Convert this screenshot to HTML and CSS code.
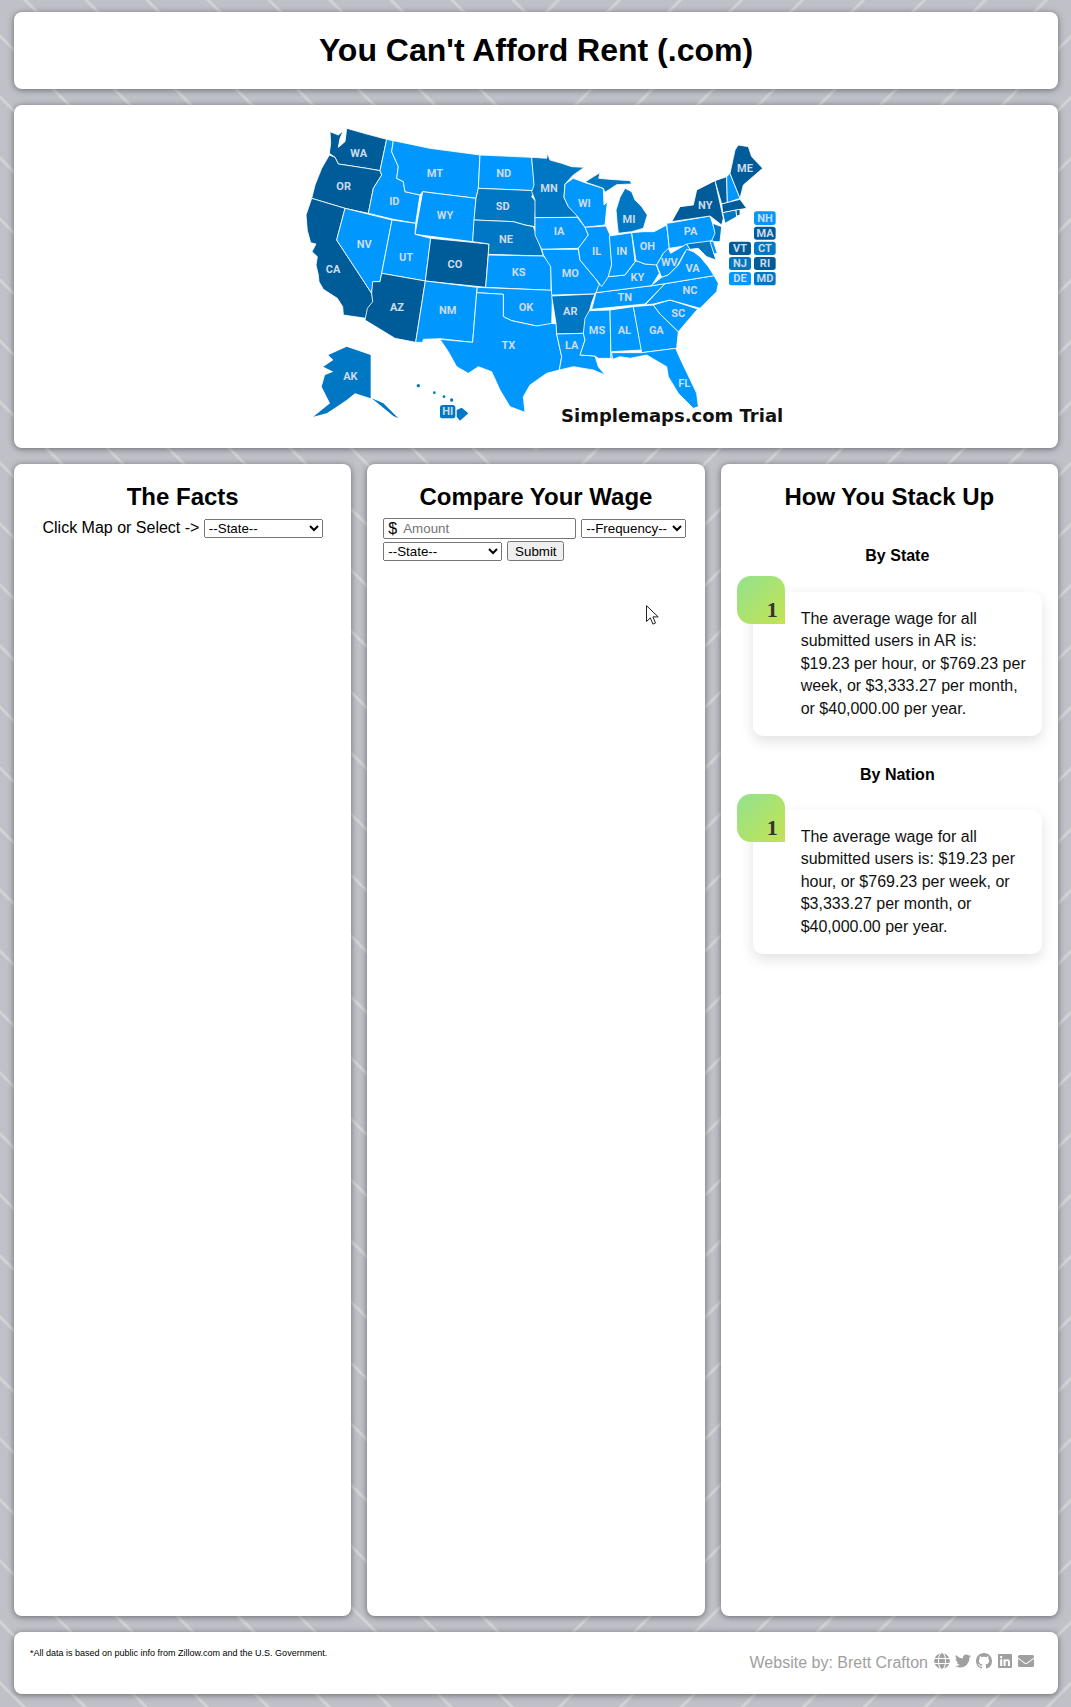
FILE: index.html
```html
<!DOCTYPE html>
<html lang="en">
<head>
    <meta charset="UTF-8">
    <meta name="viewport" content="width=device-width, initial-scale=1.0">
    <title>You Can't Afford Rent</title>
    <link rel="stylesheet" href="styles.css">
</head>
<body>
    <header class="panel site-header">
        <h1>You Can't Afford Rent (.com)</h1>
    </header>

    <section class="panel map-panel">
        <svg class="us-map" viewBox="-42 0 1620 990" role="img" aria-label="Map of the United States">
            <!-- West -->
            <g class="states">
                <polygon class="dark" points="150,65 175,75 190,62 180,85 175,112 195,95 200,55 260,72 320,88 300,182 260,175 215,168 175,162 165,142 148,130 152,100"/>
                <polygon class="dark" points="148,135 165,142 175,162 215,168 260,175 300,182 305,195 280,235 265,310 195,295 95,265 105,225 125,175"/>
                <polygon class="dark" points="95,265 195,295 170,390 275,550 280,575 258,625 190,615 188,590 172,565 130,538 117,515 115,495 108,465 112,440 96,425 108,402 92,398 82,362 78,315"/>
                <polygon class="light" points="195,295 336,330 305,490 300,515 280,515 275,550 170,390"/>
                <polygon class="light" points="320,88 340,92 335,125 355,170 350,205 370,215 375,245 420,255 407,340 336,327 265,310 280,235 305,195 300,182"/>
                <polygon class="light" points="340,92 450,115 600,135 595,235 588,265 428,245 420,255 375,245 370,215 350,205 355,170 335,125"/>
                <polygon class="light" points="428,245 588,265 578,395 405,373"/>
                <polygon class="light" points="336,330 407,340 405,373 452,385 436,513 305,490"/>
                <polygon class="dark" points="452,385 627,402 617,532 436,513"/>
                <polygon class="dark" points="305,490 436,513 407,697 345,685 255,630 262,595 278,575 275,550 278,515 300,515"/>
                <polygon class="light" points="436,513 592,532 590,548 578,697 480,686 430,688 428,697 407,697"/>
                <polygon class="light" points="600,135 755,142 765,242 595,235"/>
                <polygon class="mid" points="595,235 765,242 755,260 768,275 765,322 765,350 735,345 700,335 582,330 588,265"/>
                <polygon class="mid" points="582,330 700,335 735,345 760,350 775,390 790,438 625,433 627,402 578,395"/>
                <polygon class="light" points="625,435 790,438 805,455 813,470 813,541 617,532"/>
                <polygon class="light" points="592,532 815,541 817,560 815,645 770,648 695,632 670,620 670,553 590,548"/>
                <polygon class="light" points="590,548 670,553 670,620 695,632 770,648 815,640 830,642 830,672 845,740 838,780 800,790 750,825 730,860 735,907 690,890 660,840 635,785 595,770 565,790 530,770 505,725 480,688 578,697"/>
            </g>

            <!-- East, drawn from its own origin -->
            <g class="states" transform="translate(750 0)">
                <polygon class="mid" points="5,142 50,145 52,130 60,150 95,160 125,170 163,172 130,195 105,222 102,262 115,290 140,310 142,322 15,323 15,270 5,245 12,225"/>
                <polygon class="light" points="105,222 130,205 165,218 220,235 222,285 232,275 225,345 165,352 145,322 115,290 102,262"/>
                <polygon class="mid" points="165,216 190,200 210,188 206,205 240,208 300,212 305,222 260,224 225,247 220,235"/>
                <polygon class="mid" points="258,300 270,262 285,235 305,245 315,270 335,290 352,315 340,355 305,365 265,370 262,345"/>
                <polygon class="light" points="15,323 142,322 165,352 175,375 145,415 35,418 15,375"/>
                <polygon class="light" points="35,418 145,418 150,450 200,510 210,528 195,552 65,555 62,470 40,435"/>
                <polygon class="mid" points="65,558 195,552 185,578 160,670 80,672 78,640"/>
                <polygon class="light" points="80,672 160,670 165,690 150,735 195,738 205,770 225,795 190,780 130,770 88,780 95,740"/>
                <polygon class="light" points="165,625 178,602 240,600 243,745 205,745 195,738 150,735 165,690 160,670"/>
                <polygon class="light" points="240,600 310,590 335,720 245,725 248,748 243,745"/>
                <polygon class="light" points="310,590 370,585 390,612 445,665 440,715 335,728"/>
                <polygon class="light" points="245,728 335,728 437,715 450,745 500,850 505,890 490,895 445,850 415,800 410,770 350,735 300,745 270,740 248,748"/>
                <polygon class="light" points="370,585 420,570 503,597 445,665 390,612"/>
                <polygon class="light" points="345,585 405,521 552,497 565,520 560,545 510,595 420,570 370,582"/>
                <polygon class="light" points="198,548 365,527 405,521 345,582 185,598"/>
                <polygon class="light" points="205,528 235,500 285,495 318,452 345,462 378,462 388,490 365,527 198,548"/>
                <polygon class="light" points="165,352 228,348 240,375 245,465 235,500 215,530 200,510 150,450 145,415 175,375"/>
                <polygon class="light" points="238,378 305,368 315,455 285,495 235,500 245,465"/>
                <polygon class="light" points="305,368 340,365 372,365 410,345 418,415 400,430 380,465 345,462 318,452"/>
                <polygon class="light" points="410,340 425,338 540,318 560,375 545,395 418,415"/>
                <polygon class="light" points="380,465 400,430 415,415 422,430 470,402 480,418 465,425 440,470 415,495 395,502"/>
                <polygon class="light" points="362,528 395,502 415,495 445,465 470,418 490,425 510,440 535,470 552,497"/>
                <polygon class="mid" points="470,402 545,392 552,432 558,450 530,440 505,415 480,418"/>
                <polygon class="light" points="540,395 550,393 562,430 552,432"/>
                <polygon class="mid" points="548,340 575,350 570,395 555,395 545,392 555,370"/>
                <polygon class="dark" points="425,335 450,290 490,285 500,240 555,212 580,325 575,345 540,318"/>
                <polygon class="dark" points="555,212 590,200 592,278 575,282"/>
                <polygon class="light" points="590,200 600,190 630,265 592,278"/>
                <polygon class="dark" points="600,190 615,120 625,105 655,110 665,140 698,175 640,225 630,265"/>
                <polygon class="dark" points="575,282 630,268 650,295 620,300 578,308"/>
                <polygon class="mid" points="578,308 618,300 620,320 585,340"/>
                <polygon class="dark" points="618,300 630,298 630,315 620,318"/>
            </g>

            <!-- Alaska and Hawaii -->
            <g class="islands">
                <polygon class="mid" points="145,735 200,710 272,735 272,865 225,850 200,870 170,890 140,910 100,920 150,880 125,830 135,795 160,785 130,770 160,750"/>
                <polygon class="mid" points="275,865 310,880 355,925 340,918 300,885"/>
                <polygon class="mid" points="530,900 545,893 565,910 540,932 530,920"/>
                <circle class="mid" cx="415" cy="827" r="5"/>
                <circle class="mid" cx="463" cy="848" r="4"/>
                <circle class="mid" cx="492" cy="860" r="4"/>
                <circle class="mid" cx="515" cy="870" r="5"/>
            </g>

            <!-- Small state keys -->
            <g class="keys" transform="translate(750 0)">
                <rect class="light" x="672" y="304" width="65" height="41" rx="8"/>
                <rect class="dark" x="672" y="350" width="65" height="39" rx="8"/>
                <rect class="dark" x="597" y="395" width="66" height="40" rx="8"/>
                <rect class="mid" x="672" y="395" width="65" height="40" rx="8"/>
                <rect class="mid" x="597" y="441" width="66" height="39" rx="8"/>
                <rect class="dark" x="672" y="441" width="65" height="39" rx="8"/>
                <rect class="light" x="597" y="486" width="66" height="40" rx="8"/>
                <rect class="mid" x="672" y="486" width="65" height="40" rx="8"/>
            </g>
            <rect class="mid" x="480" y="885" width="46" height="40" rx="8"/>

            <g class="labels">
                <text x="236" y="129">WA</text>
                <text x="191" y="228">OR</text>
                <text x="159" y="477">CA</text>
                <text x="253" y="402">NV</text>
                <text x="343" y="273">ID</text>
                <text x="465" y="189">MT</text>
                <text x="495" y="317">WY</text>
                <text x="378" y="441">UT</text>
                <text x="525" y="462">CO</text>
                <text x="351" y="591">AZ</text>
                <text x="503" y="600">NM</text>
                <text x="671" y="189">ND</text>
                <text x="668" y="288">SD</text>
                <text x="678" y="387">NE</text>
                <text x="716" y="486">KS</text>
                <text x="738" y="591">OK</text>
                <text x="685" y="705">TX</text>
                <text x="211" y="798">AK</text>
                <text x="503" y="904">HI</text>
            </g>
            <g class="labels" transform="translate(750 0)">
                <text x="57" y="234">MN</text>
                <text x="163" y="279">WI</text>
                <text x="297" y="327">MI</text>
                <text x="87" y="364">IA</text>
                <text x="121" y="489">MO</text>
                <text x="121" y="603">AR</text>
                <text x="125" y="705">LA</text>
                <text x="201" y="660">MS</text>
                <text x="283" y="660">AL</text>
                <text x="379" y="660">GA</text>
                <text x="463" y="819">FL</text>
                <text x="445" y="609">SC</text>
                <text x="480" y="540">NC</text>
                <text x="284" y="561">TN</text>
                <text x="322" y="501">KY</text>
                <text x="200" y="423">IL</text>
                <text x="275" y="423">IN</text>
                <text x="352" y="408">OH</text>
                <text x="482" y="363">PA</text>
                <text x="418" y="456">WV</text>
                <text x="488" y="474">VA</text>
                <text x="526" y="285">NY</text>
                <text x="645" y="174">ME</text>
                <text x="705" y="324">NH</text>
                <text x="705" y="369">MA</text>
                <text x="630" y="414">VT</text>
                <text x="705" y="414">CT</text>
                <text x="630" y="459">NJ</text>
                <text x="705" y="459">RI</text>
                <text x="630" y="505">DE</text>
                <text x="705" y="505">MD</text>
            </g>

            <text class="trial-mark" x="843" y="937">Simplemaps.com Trial</text>
        </svg>
    </section>

    <main class="columns">
        <section class="panel column">
            <h2>The Facts</h2>
            <p class="select-line">Click Map or Select -&gt;
                <select class="state-select">
                    <option>--State--</option>
                </select>
            </p>
        </section>

        <section class="panel column">
            <h2>Compare Your Wage</h2>
            <form class="wage-form">
                <div class="amount-box">
                    <span class="amount-sign">$</span>
                    <input class="amount-input" type="text" placeholder="Amount">
                </div>
                <select class="frequency-select">
                    <option>--Frequency--</option>
                </select>
                <select class="state-select">
                    <option>--State--</option>
                </select>
                <button class="submit-button" type="button">Submit</button>
            </form>
        </section>

        <section class="panel column">
            <h2>How You Stack Up</h2>
            <h3 class="first-heading">By State</h3>
            <div class="rank-card">
                <span class="rank-badge">1</span>
                The average wage for all submitted users in AR is: $19.23 per hour, or $769.23 per week, or $3,333.27 per month, or $40,000.00 per year.
            </div>
            <h3>By Nation</h3>
            <div class="rank-card">
                <span class="rank-badge">1</span>
                The average wage for all submitted users is: $19.23 per hour, or $769.23 per week, or $3,333.27 per month, or $40,000.00 per year.
            </div>
        </section>
    </main>

    <footer class="panel site-footer">
        <p class="disclaimer">*All data is based on public info from Zillow.com and the U.S. Government.</p>
        <div class="credit">
            <span class="credit-name">Website by: Brett Crafton</span>
            <svg class="icon" viewBox="0 0 496 512"><path d="M336.5 160C322 70.7 287.8 8 248 8s-74 62.7-88.5 152h177zM152 256c0 22.2 1.2 43.5 3.3 64h185.3c2.1-20.5 3.3-41.8 3.3-64s-1.2-43.5-3.3-64H155.3c-2.1 20.5-3.3 41.8-3.3 64zm324.7-96c-28.6-67.9-86.5-120.4-158-141.6 24.4 33.8 41.2 84.7 50 141.6h108zM177.2 18.4C105.8 39.6 47.8 92.1 19.3 160h108c8.7-56.9 25.5-107.8 49.9-141.6zM487.4 192H372.7c2.1 21 3.3 42.5 3.3 64s-1.2 43-3.3 64h114.6c5.5-20.5 8.6-41.8 8.6-64s-3.1-43.5-8.5-64zM120 256c0-21.5 1.2-43 3.3-64H8.6C3.2 212.5 0 233.8 0 256s3.2 43.5 8.6 64h114.6c-2-21-3.2-42.5-3.2-64zm39.5 96c14.5 89.3 48.7 152 88.5 152s74-62.7 88.5-152h-177zm159.3 141.6c71.4-21.2 129.4-73.7 158-141.6h-108c-8.8 56.9-25.6 107.8-50 141.6zM19.3 352c28.6 67.9 86.5 120.4 158 141.6-24.4-33.8-41.2-84.7-50-141.6h-108z"/></svg>
            <svg class="icon" viewBox="0 0 512 512"><path d="M459.37 151.716c.325 4.548.325 9.097.325 13.645 0 138.72-105.583 298.558-298.558 298.558-59.452 0-114.68-17.219-161.137-47.106 8.447.974 16.568 1.299 25.34 1.299 49.055 0 94.213-16.568 130.274-44.832-46.132-.975-84.792-31.188-98.112-72.772 6.498.974 12.995 1.624 19.818 1.624 9.421 0 18.843-1.3 27.614-3.573-48.081-9.747-84.143-51.98-84.143-102.985v-1.299c13.969 7.797 30.214 12.67 47.431 13.319-28.264-18.843-46.781-51.005-46.781-87.391 0-19.492 5.197-37.36 14.294-52.954 51.655 63.675 129.3 105.258 216.365 109.807-1.624-7.797-2.599-15.918-2.599-24.04 0-57.828 46.782-104.934 104.934-104.934 30.213 0 57.502 12.67 76.67 33.137 23.715-4.548 46.456-13.32 66.599-25.34-7.798 24.366-24.366 44.833-46.132 57.827 21.117-2.273 41.584-8.122 60.426-16.243-14.292 20.791-32.161 39.308-52.628 54.253z"/></svg>
            <svg class="icon" viewBox="0 0 16 16"><path d="M8 0C3.58 0 0 3.58 0 8c0 3.54 2.29 6.53 5.47 7.59.4.07.55-.17.55-.38 0-.19-.01-.82-.01-1.49-2.01.37-2.53-.49-2.69-.94-.09-.23-.48-.94-.82-1.13-.28-.15-.68-.52-.01-.53.63-.01 1.08.58 1.23.82.72 1.21 1.87.87 2.33.66.07-.52.28-.87.51-1.07-1.78-.2-3.64-.89-3.64-3.95 0-.87.31-1.59.82-2.15-.08-.2-.36-1.02.08-2.12 0 0 .67-.21 2.2.82.64-.18 1.32-.27 2-.27.68 0 1.36.09 2 .27 1.53-1.04 2.2-.82 2.2-.82.44 1.1.16 1.92.08 2.12.51.56.82 1.27.82 2.15 0 3.07-1.87 3.75-3.65 3.95.29.25.54.73.54 1.48 0 1.07-.01 1.93-.01 2.2 0 .21.15.46.55.38A8.013 8.013 0 0016 8c0-4.42-3.58-8-8-8z"/></svg>
            <svg class="icon" viewBox="0 0 448 512"><path d="M416 32H31.9C14.3 32 0 46.5 0 64.3v383.4C0 465.5 14.3 480 31.9 480H416c17.6 0 32-14.5 32-32.3V64.3c0-17.8-14.4-32.3-32-32.3zM135.4 416H69V202.2h66.5V416zm-33.2-243c-21.3 0-38.5-17.3-38.5-38.5S80.9 96 102.2 96c21.2 0 38.5 17.3 38.5 38.5 0 21.3-17.2 38.5-38.5 38.5zm282.1 243h-66.4V312c0-24.8-.5-56.7-34.5-56.7-34.6 0-39.9 27-39.9 54.9V416h-66.4V202.2h63.7v29.2h.9c8.9-16.8 30.6-34.5 62.9-34.5 67.2 0 79.7 44.3 79.7 101.9V416z"/></svg>
            <svg class="icon" viewBox="0 0 512 512"><path d="M502.3 190.8c3.9-3.1 9.7-.2 9.7 4.7V400c0 26.5-21.5 48-48 48H48c-26.5 0-48-21.5-48-48V195.6c0-5 5.7-7.8 9.7-4.7 22.4 17.4 52.1 39.5 154.1 113.6 21.1 15.4 56.7 47.8 92.2 47.6 35.7.3 72-32.8 92.3-47.6 102-74.1 131.6-96.3 154-113.7zM256 320c23.2.4 56.6-29.2 73.4-41.4 132.7-96.3 142.8-104.7 173.4-128.7 5.8-4.5 9.2-11.5 9.2-18.9v-19c0-26.5-21.5-48-48-48H48C21.5 64 0 85.5 0 112v19c0 7.4 3.4 14.3 9.2 18.9 30.6 23.9 40.7 32.4 173.4 128.7 16.8 12.2 50.2 41.8 73.4 41.4z"/></svg>
        </div>
    </footer>

    <!-- Mouse pointer caught in the screenshot -->
    <svg class="cursor" viewBox="0 0 13 20"><path d="M.5.7v15.8l3.8-3.6 2.6 6.2 2.6-1.1-2.6-6.1h5.3z"/></svg>
</body>
</html>
```

FILE: styles.css
```css
/* General Styles */
html {
    height: 100%;
}

body {
    margin: 0;
    padding: 12px 13px 13px 14px;
    box-sizing: border-box;
    height: 1707px;
    display: flex;
    flex-direction: column;
    gap: 16px;
    position: relative;
    font-family: "Liberation Sans", Arial, sans-serif;
    font-size: 16px;
    color: #000;
    background-color: #c0c0c8;
    background-image:
        repeating-linear-gradient(45deg, transparent 0, transparent 15px, #d3d3d7 16.4px, #d3d3d7 17.8px, transparent 19.2px, transparent 43.13px),
        repeating-linear-gradient(-45deg, transparent 0, transparent 15px, #d3d3d7 16.4px, #d3d3d7 17.8px, transparent 19.2px, transparent 43.13px);
    background-size: 50% 100%;
    background-position: left top, right top;
    background-repeat: no-repeat;
}

/* Panels */
.panel {
    background-color: #fff;
    border-radius: 8px;
    box-shadow: 0 1px 6px rgba(30, 30, 40, 0.55);
}

/* Header */
.site-header {
    height: 77px;
    display: flex;
    align-items: center;
    justify-content: center;
}

h1 {
    margin: 0;
    font-size: 32px;
}

/* Map */
.map-panel {
    height: 343px;
    padding-top: 5px;
    box-sizing: border-box;
}

.us-map {
    display: block;
    width: 540px;
    height: 330px;
    margin: 0 auto;
}

.states polygon {
    stroke: #fff;
    stroke-width: 2.5;
    stroke-linejoin: round;
}

.light {
    fill: #0098ff;
}

.mid {
    fill: #0077c2;
}

.dark {
    fill: #005c99;
}

.labels text {
    font-family: Roboto, "Liberation Sans", sans-serif;
    font-size: 33px;
    font-weight: 700;
    fill: #cddbeb;
    text-anchor: middle;
    dominant-baseline: central;
}

.trial-mark {
    font-family: "DejaVu Sans", sans-serif;
    font-size: 54px;
    font-weight: 700;
    fill: #111;
}

/* Columns */
.columns {
    height: 1152px;
    display: grid;
    grid-template-columns: repeat(3, 1fr);
    gap: 16px;
}

.column {
    padding: 19px 16px 0;
    min-width: 0;
}

h2 {
    margin: 0;
    font-size: 24px;
    line-height: 28px;
    text-align: center;
}

h3 {
    margin: 30px 0 26px 16px;
    font-size: 16px;
    line-height: 18px;
    text-align: center;
}

h3.first-heading {
    margin-top: 36px;
    margin-bottom: 27px;
}

.select-line {
    margin: 8px 0 0;
    text-align: center;
}

/* Form Controls */
select,
button,
input {
    font-family: "Liberation Sans", Arial, sans-serif;
    font-size: 13.33px;
}

.state-select {
    width: 119px;
    height: 19px;
}

.frequency-select {
    width: 105px;
    height: 19px;
}

.wage-form {
    display: flex;
    flex-wrap: wrap;
    align-items: center;
    gap: 2px 5px;
    margin-top: 7px;
}

.amount-box {
    width: 193px;
    height: 21px;
    box-sizing: border-box;
    display: flex;
    align-items: center;
    gap: 6px;
    padding-left: 4px;
    border: 1px solid #767676;
    border-radius: 2px;
}

.amount-sign {
    font-size: 16px;
}

.amount-input {
    flex: 1;
    min-width: 0;
    padding: 0;
    border: none;
    outline: none;
}

.submit-button {
    width: 57px;
    height: 20px;
    padding: 0;
}

/* Rank Cards */
.rank-card {
    position: relative;
    margin-left: 16px;
    padding: 16px 16px 16px 48px;
    border-radius: 10px;
    font-size: 16px;
    line-height: 22.4px;
    color: #111;
    background-color: #fff;
    box-shadow: 0 5px 14px rgba(0, 0, 0, 0.12);
}

.rank-badge {
    position: absolute;
    top: -16px;
    left: -16px;
    width: 48px;
    height: 48px;
    box-sizing: border-box;
    padding: 20px 7px 0 0;
    border-radius: 14px 14px 0 14px;
    font-family: "Liberation Serif", serif;
    font-size: 22px;
    font-weight: 700;
    line-height: 28px;
    text-align: right;
    color: #333;
    background: linear-gradient(135deg, #93e28f 0%, #c4e350 100%);
}

/* Footer */
.site-footer {
    height: 62px;
    box-sizing: border-box;
    padding: 16px 24px 0 16px;
    display: flex;
    justify-content: space-between;
    align-items: flex-start;
}

.disclaimer {
    margin: 0;
    font-size: 9px;
    line-height: 10px;
}

.credit {
    display: flex;
    align-items: center;
    gap: 5px;
    margin-top: 6px;
    color: #a0a0a0;
}

.credit-name {
    margin-right: 1px;
}

.icon {
    width: 16px;
    height: 16px;
    margin-top: -4px;
    fill: #a0a0a0;
}

/* Pointer */
.cursor {
    position: absolute;
    left: 646px;
    top: 605px;
    width: 13px;
    height: 20px;
    fill: #fff;
    stroke: #222;
    stroke-width: 1;
}
```
